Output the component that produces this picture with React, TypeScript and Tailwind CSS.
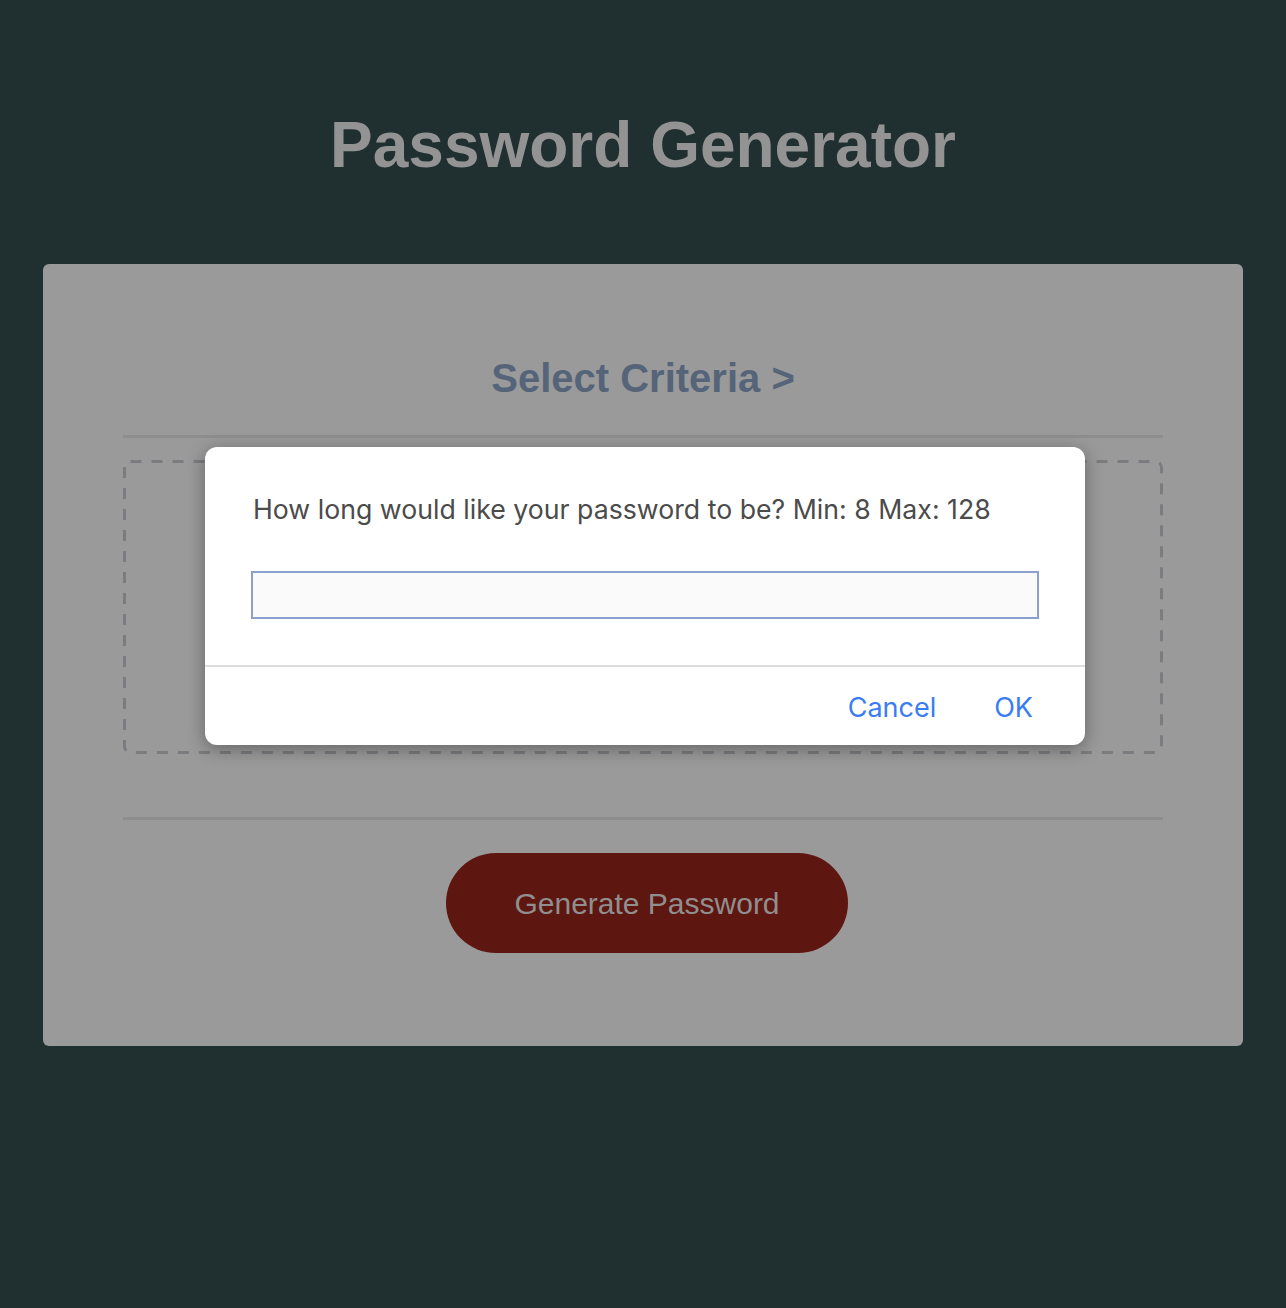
import React from 'react';

export default function App() {
  return (
    <div className="relative min-h-[1308px] w-full bg-[#202f30] font-['Liberation_Sans',Arial,sans-serif]">
      <h1 className="pt-[106px] text-center text-[64px] font-bold leading-[78px] text-[#939393]">
        Password Generator
      </h1>

      {/* Card */}
      <div className="mx-[43px] mt-[80px] flex h-[782px] flex-col items-center rounded-[6px] bg-[#9a9a9a] px-[80px]">
        <h2 className="mt-[90px] text-[40px] font-bold leading-[48px] text-[#566479]">Select Criteria &gt;</h2>
        <div className="mt-[33px] h-[3px] w-full bg-[#8e8e8e]" />
        <div className="relative mt-[22px] h-[294px] w-full">
          <svg className="absolute inset-0 h-full w-full" preserveAspectRatio="none">
            <rect
              x="1.5"
              y="1.5"
              width="calc(100% - 3px)"
              height="calc(100% - 3px)"
              rx="6"
              fill="none"
              stroke="#7b7c80"
              strokeWidth="3"
              strokeDasharray="11 10"
            />
          </svg>
        </div>
        <div className="mt-[63px] h-[3px] w-full bg-[#8e8e8e]" />
        <button className="ml-[8px] mt-[33px] h-[100px] w-[402px] rounded-full bg-[#5e1610] font-['Liberation_Sans',Arial,sans-serif] text-[30px] text-[#8f8f8f]">
          Generate Password
        </button>
      </div>

      {/* Prompt dialog */}
      <div className="absolute left-[205px] top-[447px] w-[880px] rounded-[12px] bg-white shadow-[0_4px_18px_rgba(0,0,0,0.35)] font-['Inter',sans-serif]">
        <p className="px-[48px] pt-[46px] text-[26.7px] leading-[32px] text-[#4b4b4b]">
          How long would like your password to be? Min: 8 Max: 128
        </p>
        <div className="mx-[46px] mt-[46px] h-[48px] border-2 border-[#8ba0cd] bg-[#fafafa]" />
        <div className="mt-[46px] h-[2px] bg-[#dcdcdc]" />
        <div className="flex h-[78px] items-center justify-end gap-[58px] pr-[52px] pt-[4px] text-[27px] text-[#3a7cf2]">
          <span>Cancel</span>
          <span>OK</span>
        </div>
      </div>
    </div>
  );
}
